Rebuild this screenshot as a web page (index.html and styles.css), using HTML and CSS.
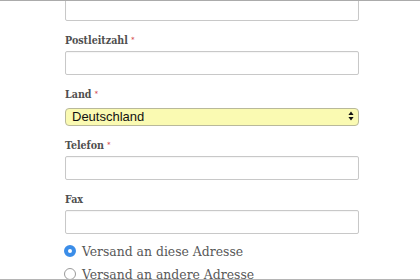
FILE: index.html
```html
<!DOCTYPE html>
<html lang="de">
<head>
<meta charset="utf-8">
<title>Adresse</title>
<link rel="stylesheet" href="styles.css">
</head>
<body>
<div class="frame">
  <form class="form">
    <div class="field first">
      <input class="text" type="text">
    </div>
    <div class="field">
      <label class="label">Postleitzahl <span class="req">*</span></label>
      <input class="text" type="text">
    </div>
    <div class="field">
      <label class="label">Land <span class="req">*</span></label>
      <div class="select-wrap">
        <select class="select"><option>Deutschland</option></select>
        <svg class="arrows" width="6" height="10" viewBox="0 0 6 10"><path d="M3 0.5 L5.6 4 H0.4 Z M3 9.5 L5.6 6 H0.4 Z" fill="#111"/></svg>
      </div>
    </div>
    <div class="field">
      <label class="label">Telefon <span class="req">*</span></label>
      <input class="text" type="text">
    </div>
    <div class="field">
      <label class="label">Fax</label>
      <input class="text" type="text">
    </div>
    <div class="radios">
      <label class="radio"><input type="radio" name="ship" checked><span>Versand an diese Adresse</span></label>
      <label class="radio"><input type="radio" name="ship"><span>Versand an andere Adresse</span></label>
    </div>
  </form>
</div>
</body>
</html>
```
FILE: styles.css
```css
html, body {
  margin: 0;
  padding: 0;
  background: #fff;
}
.frame {
  height: 278px;
  border-top: 1px solid #ababab;
  border-bottom: 1px solid #b4b4b4;
  overflow: hidden;
  background: #fff;
}
.form {
  width: 294px;
  margin-left: 65px;
  display: flex;
  flex-direction: column;
}
.field {
  display: flex;
  flex-direction: column;
  margin-bottom: 12px;
}
.field.first {
  margin-top: -4px;
}
.label {
  font-family: "DejaVu Serif Condensed", "DejaVu Serif", serif;
  font-weight: bold;
  font-size: 10.6px;
  line-height: 14px;
  height: 14px;
  color: #4f4f4f;
  margin-bottom: 4px;
}
.req {
  color: #d23b3b;
  font-size: 7px;
  vertical-align: 2px;
  font-weight: normal;
}
.text {
  box-sizing: border-box;
  height: 24px;
  width: 100%;
  margin: 0;
  border: 1px solid #c8c8c8;
  border-radius: 2px;
  background: #fff;
  box-shadow: inset 0 1px 1px rgba(0,0,0,0.04);
}
.select-wrap {
  position: relative;
  margin-top: 2px;
  margin-bottom: 0;
}
.select {
  -webkit-appearance: none;
  appearance: none;
  box-sizing: border-box;
  width: 100%;
  height: 18px;
  margin: 0;
  padding: 0 0 0 6px;
  border: 1px solid #b9b99a;
  border-radius: 4px;
  background: #fafab2;
  font-family: "Liberation Sans", Arial, sans-serif;
  font-size: 13px;
  line-height: 16px;
  color: #111;
}
.arrows {
  position: absolute;
  right: 5px;
  top: 4px;
}
.radios {
  display: flex;
  flex-direction: column;
  margin-top: -7px;
}
.radio {
  display: flex;
  align-items: center;
  height: 23px;
  font-family: "DejaVu Serif Condensed", "DejaVu Serif", serif;
  font-size: 13.8px;
  color: #585858;
}
.radio input {
  -webkit-appearance: none;
  appearance: none;
  box-sizing: border-box;
  width: 12px;
  height: 12px;
  margin: 1px 6px 0 -1px;
  border: 1px solid #9a9a9a;
  border-radius: 50%;
  background: #fff;
  flex: none;
}
.radio input:checked {
  border: 4px solid #3b8de8;
  background: #fff;
}
```
